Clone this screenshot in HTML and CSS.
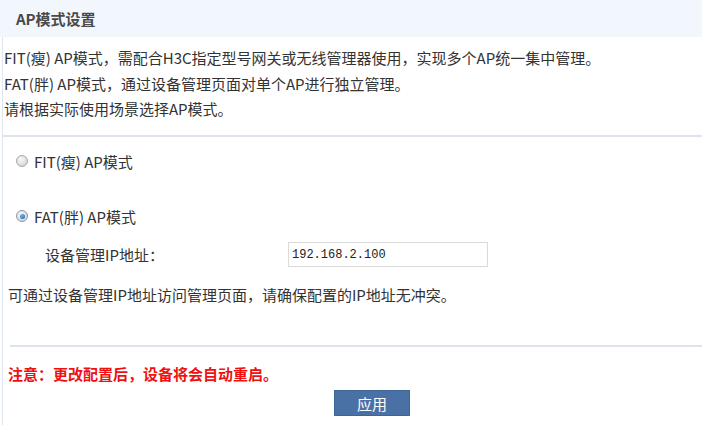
FILE: index.html
```html
<!DOCTYPE html>
<html lang="zh-CN">
<head>
  <meta charset="UTF-8">
  <title>AP模式设置</title>
  <link rel="stylesheet" href="styles.css">
</head>
<body>
  <div class="panel">
    <div class="panel-title">AP模式设置</div>
    <div class="panel-body">
      <div class="intro">
        <p>FIT(瘦) AP模式，需配合H3C指定型号网关或无线管理器使用，实现多个AP统一集中管理。</p>
        <p>FAT(胖) AP模式，通过设备管理页面对单个AP进行独立管理。</p>
        <p>请根据实际使用场景选择AP模式。</p>
      </div>
      <div class="divider"></div>

      <label class="radio-row first">
        <span class="radio"></span>FIT(瘦) AP模式
      </label>
      <label class="radio-row second">
        <span class="radio checked"></span>FAT(胖) AP模式
      </label>

      <div class="field-row">
        <span class="field-label">设备管理IP地址：</span>
        <input class="field-input" type="text" value="192.168.2.100">
      </div>

      <p class="hint">可通过设备管理IP地址访问管理页面，请确保配置的IP地址无冲突。</p>

      <div class="divider short"></div>

      <p class="warn">注意：更改配置后，设备将会自动重启。</p>

      <div class="actions">
        <button class="btn-apply">应用</button>
      </div>
    </div>
  </div>
</body>
</html>
```

FILE: styles.css
```css
body {
  margin: 0;
  background: #fff;
  font-family: "Noto Sans CJK SC", "Noto Sans", sans-serif;
  font-size: 15px;
  color: #333;
}

p {
  margin: 0;
}

.panel {
  width: 702px;
}

.panel-title {
  height: 37px;
  line-height: 37px;
  padding-left: 16px;
  background: #f2f6fd;
  color: #4a4a4a;
  font-weight: bold;
}

.panel-body {
  margin-left: 2px;
  border-left: 1px solid #dfe5ee;
  height: 388px;
}

.intro {
  padding: 8px 0 0 1px;
  line-height: 25.5px;
  margin-bottom: 13px;
}

.divider {
  height: 2px;
  background: #dde4ee;
}

.divider.short {
  margin-left: 7px;
}

.radio-row {
  display: flex;
  align-items: center;
  padding-left: 13px;
  line-height: 25.5px;
}

.radio-row.first {
  margin-top: 12px;
}

.radio-row.second {
  margin-top: 29.5px;
}

.radio {
  width: 10px;
  height: 10px;
  border-radius: 50%;
  border: 1px solid #a8a8a8;
  background: radial-gradient(circle at 40% 35%, #fafafa, #c9c9c9);
  margin-right: 6px;
  position: relative;
}

.radio.checked {
  border-color: #8a98aa;
}

.radio.checked::after {
  content: "";
  position: absolute;
  left: 2.5px;
  top: 2.5px;
  width: 5px;
  height: 5px;
  border-radius: 50%;
  background: radial-gradient(circle at 40% 35%, #6fb4ea, #1d5fa8);
}

.field-row {
  display: flex;
  align-items: center;
  margin-top: 13px;
  padding-left: 42px;
  height: 25px;
}

.field-label {
  width: 243px;
}

.field-input {
  box-sizing: border-box;
  width: 200px;
  height: 25px;
  border: 1px solid #dadada;
  padding: 0 3px;
  font-family: "Liberation Mono", "DejaVu Sans Mono", monospace;
  font-size: 12px;
  color: #222;
  outline: none;
}

.hint {
  margin-top: 15px;
  padding-left: 5px;
  line-height: 25.5px;
}

.divider.short {
  margin-top: 37px;
}

.warn {
  margin-top: 14px;
  padding-left: 5px;
  line-height: 25.5px;
  color: #f01010;
  font-weight: bold;
}

.actions {
  margin-top: 4px;
  padding-left: 331px;
}

.btn-apply {
  width: 76px;
  height: 26px;
  border: 1px solid #3d6596;
  background: #4a71a5;
  color: #fff;
  font-family: "Noto Sans CJK SC", sans-serif;
  font-size: 15px;
  padding: 0;
  cursor: pointer;
}
```
